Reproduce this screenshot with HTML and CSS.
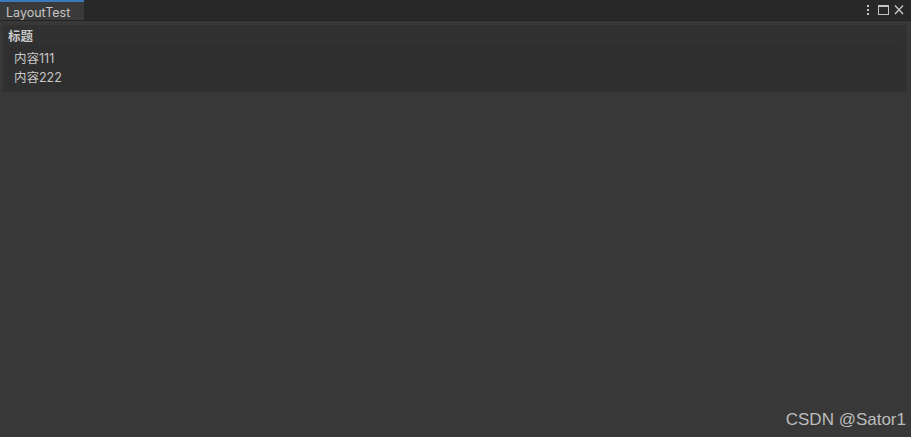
FILE: index.html
```html
<!DOCTYPE html>
<html>
<head>
<meta charset="utf-8">
<link rel="stylesheet" href="styles.css">
</head>
<body>
<div class="window">
  <div class="titlebar">
    <div class="tab">LayoutTest</div>
    <div class="spacer"></div>
    <div class="controls">
      <svg class="ico dots" width="4" height="12" viewBox="0 0 4 12"><rect x="1" y="1" width="2" height="2" fill="#c4c4c4"/><rect x="1" y="5" width="2" height="2" fill="#c4c4c4"/><rect x="1" y="9" width="2" height="2" fill="#c4c4c4"/></svg>
      <svg class="ico max" width="11" height="12" viewBox="0 0 11 12"><rect x="0.5" y="1.5" width="10" height="9" fill="none" stroke="#c4c4c4" stroke-width="1"/><rect x="0" y="1" width="11" height="2" fill="#c4c4c4"/></svg>
      <svg class="ico close" width="10" height="12" viewBox="0 0 10 12"><path d="M1 1.5 L9 10 M9 1.5 L1 10" stroke="#c4c4c4" stroke-width="1.4"/></svg>
    </div>
  </div>
  <div class="content">
    <div class="group">
      <div class="title">标题</div>
      <div class="inner">
        <div class="line">内容111</div>
        <div class="line">内容222</div>
      </div>
    </div>
  </div>
  <div class="watermark">CSDN @Sator1</div>
</div>
</body>
</html>
```
FILE: styles.css
```css
html, body { margin: 0; padding: 0; }
body {
  width: 911px; height: 437px; overflow: hidden;
  background: #383838;
  font-family: Inter, "Noto Sans CJK SC", sans-serif;
  color: #c8c8c8;
}
.window { display: flex; flex-direction: column; height: 437px; position: relative; }
.titlebar {
  display: flex; height: 21px; background: #282828;
  border-bottom: 1px solid #232323;
  box-sizing: border-box;
}
.tab {
  width: 84px; box-sizing: border-box;
  background: #3a3a3a; border-top: 2px solid #3a79bb;
  font-size: 12.5px; color: #c4c4c4;
  padding: 3px 0 0 6px; line-height: 16px;
}
.spacer { flex: 1; }
.controls { display: flex; align-items: center; padding-right: 7px; }
.ico { display: block; }
.dots { margin-right: 8px; }
.max { margin-right: 5px; }
.content { padding: 4px 4px 0 3px; }
.group {
  background: #313131;
  padding: 0 4px 3px 5px;
}
.title { font-size: 12.5px; font-weight: bold; color: #c8c8c8; line-height: 21px; height: 21px; padding-top: 1px; box-sizing: border-box; }
.inner {
  background: #2f2f2f;
  padding: 3px 6px 2px 6px;
}
.line { font-size: 12.5px; line-height: 19px; color: #c8c8c8; }
.line + .line { padding-top: 0; }
.watermark {
  position: absolute; right: 5px; bottom: 7px;
  font-family: "Liberation Sans", sans-serif;
  font-size: 17px; color: #bdbdbd;
}
```
